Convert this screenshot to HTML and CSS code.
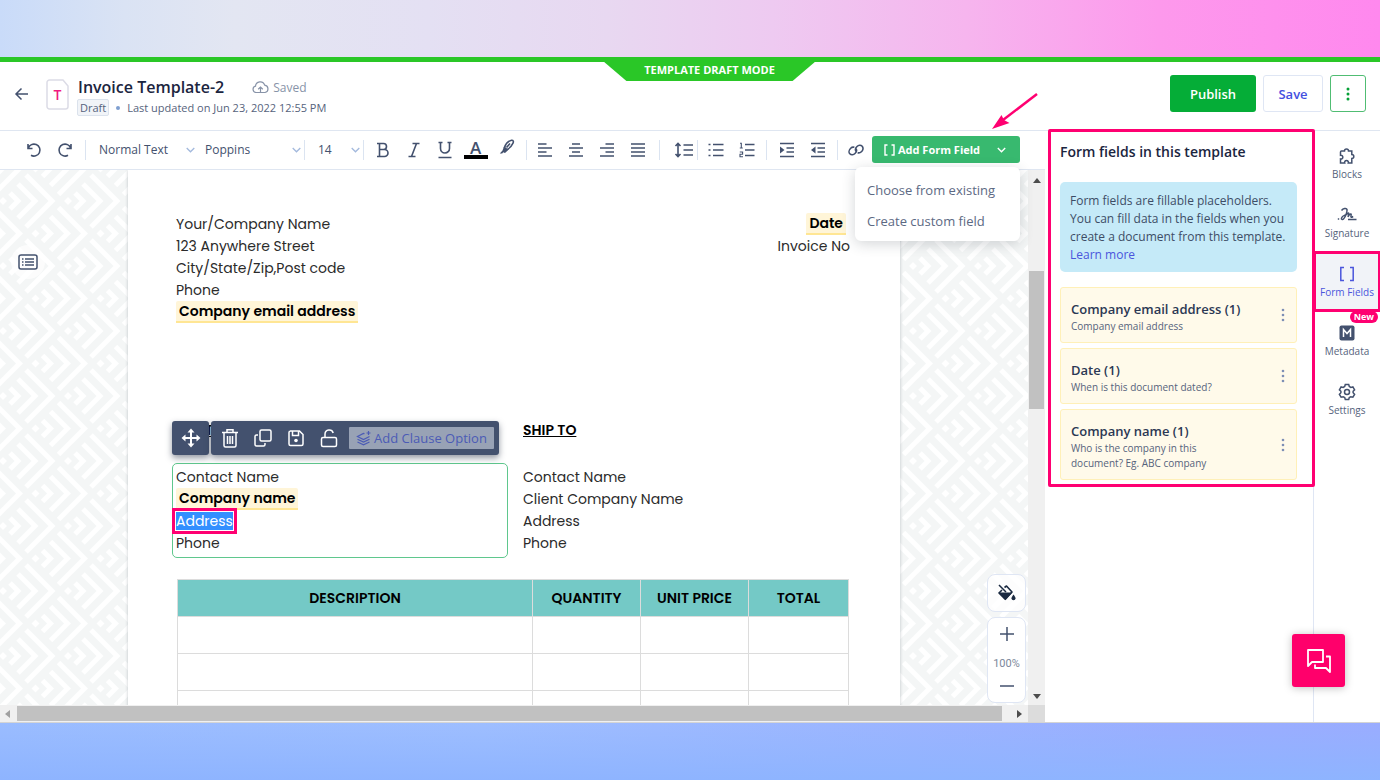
FILE: index.html
```html
<!DOCTYPE html>
<html lang="en">
<head>
<meta charset="utf-8">
<meta name="viewport" content="width=device-width, initial-scale=1">
<title>Invoice Template-2</title>
<link rel="stylesheet" href="styles.css">
</head>
<body>
<div class="app">
  <header class="topbar">
    <div class="mode-badge">TEMPLATE DRAFT MODE</div>
    <button class="back" aria-label="Back"><svg width="16" height="14" viewBox="0 0 16 14"><path d="M14 7H2M7.500 1.500 2 7l5.500 5.500"/></svg></button>
    <div class="file-icon">
      <svg width="23" height="31" viewBox="0 0 23 31"><path d="M3.500 1H17l5 6v20.500a2.500 2.500 0 0 1-2.500 2.500h-16A2.500 2.500 0 0 1 1 27.500v-24A2.500 2.500 0 0 1 3.500 1z" fill="#fff" stroke="#dcdce6" stroke-width="1.500"/></svg>
      <span>T</span>
    </div>
    <div class="file-info">
      <div class="title-row">
        <h1>Invoice Template-2</h1>
        <span class="saved"><svg width="17" height="14" viewBox="0 0 17 14"><path d="M5 12.500H4A3.200 3.200 0 0 1 3.500 6.200 4.700 4.700 0 0 1 12.700 5.200 3.700 3.700 0 0 1 13 12.500H12"/><path d="M8.500 12.500V7M6.200 9.200 8.500 7l2.300 2.200M5 12.500h7"/></svg>Saved</span>
      </div>
      <div class="meta-row"><span class="draft">Draft</span><i class="dot"></i><span>Last updated on Jun 23, 2022 12:55 PM</span></div>
    </div>
    <div class="actions">
      <button class="publish">Publish</button>
      <button class="save">Save</button>
      <button class="more" aria-label="More"><svg width="4" height="14" viewBox="0 0 4 14"><circle cx="2" cy="2" r="1.500"/><circle cx="2" cy="7" r="1.500"/><circle cx="2" cy="12" r="1.500"/></svg></button>
    </div>
  </header>

  <main class="workspace">
    <section class="editor">
      <div class="toolbar">
        <button class="tool" aria-label="Undo"><svg width="16" height="16" viewBox="0 0 16 16"><path d="M2 2v4.500h4.500M2.300 6.200A6 6 0 1 1 5 13.300"/></svg></button>
        <button class="tool" aria-label="Redo"><svg width="16" height="16" viewBox="0 0 16 16"><path d="M14 2v4.500H9.500M13.700 6.200A6 6 0 1 0 11 13.300"/></svg></button>
        <i class="sep wide"></i>
        <select class="pick" aria-label="Text style"><option>Normal Text</option></select>
        <select class="pick family" aria-label="Font"><option>Poppins</option></select>
        <i class="sep wide flush"></i>
        <select class="pick size" aria-label="Font size"><option>14</option></select>
        <i class="sep flush"></i>
        <button class="tool" aria-label="Bold"><svg width="16" height="16" viewBox="0 0 16 16"><path d="M2 1.500h6.500a3 3 0 0 1 0 6H4.500h5a3.400 3.400 0 0 1 0 7H2M4.500 1.500v13"/></svg></button>
        <button class="tool" aria-label="Italic"><svg width="16" height="16" viewBox="0 0 16 16"><path d="M6.500 1.500h7M2.500 14.500h7M10.500 1.500l-5 13"/></svg></button>
        <button class="tool" aria-label="Underline"><svg width="16" height="18" viewBox="0 0 16 18"><path d="M1.500 1.500h4M10.500 1.500h4M3.500 1.500v6a4.500 4.500 0 0 0 9 0v-6M1.500 16.500h13"/></svg></button>
        <button class="tool color" aria-label="Text color"><span>A</span></button>
        <button class="tool" aria-label="Highlight"><svg class="brush" width="16" height="16" viewBox="0 0 16 16"><path d="M5.500 8.500C6.500 5.500 9.500 2 12.500 1.200c1.800-.2 2.300 1.300 1.500 3C12.500 7.500 10.500 9.500 8 10.500z"/><path class="solid" d="M5 7.500l4 3.800-3 2.700-1.800-.8-1 1.300H.8l2.700-3z"/><path d="M7.500 8.500l3.500-4"/></svg></button>
        <i class="sep"></i>
        <button class="tool" aria-label="Align left"><svg width="16" height="16" viewBox="0 0 16 16"><path d="M1 2h8.500M1 6h14M1 10h8.500M1 14h14"/></svg></button>
        <button class="tool" aria-label="Align center"><svg width="16" height="16" viewBox="0 0 16 16"><path d="M4 2h8M1 6h14M4 10h8M1 14h14"/></svg></button>
        <button class="tool" aria-label="Align right"><svg width="16" height="16" viewBox="0 0 16 16"><path d="M6.500 2H15M1 6h14M6.500 10H15M1 14h14"/></svg></button>
        <button class="tool" aria-label="Justify"><svg width="16" height="16" viewBox="0 0 16 16"><path d="M1 2h14M1 6h14M1 10h14M1 14h14"/></svg></button>
        <i class="sep spaced"></i>
        <button class="tool lines" aria-label="Line height"><svg width="20" height="16" viewBox="0 0 20 16"><path d="M4 2v12M1.500 4 4 1.500 6.500 4M1.500 12 4 14.500 6.500 12M9.500 3H19M9.500 8H19M9.500 13H19"/></svg></button>
        <i class="sep tight"></i>
        <button class="tool" aria-label="Bullet list"><svg width="16" height="16" viewBox="0 0 16 16"><path d="M5 2.500h10.500M5 8h10.500M5 13.500h10.500M.5 2.500h2M.5 8h2M.5 13.500h2"/></svg></button>
        <button class="tool" aria-label="Numbered list"><svg width="16" height="16" viewBox="0 0 16 16"><path d="M6 2.500h9.500M6 8h9.500M6 13.500h9.500"/><path class="thin" d="M1 1.200h1.300V6M.8 6h3M.8 10h2.800v2.300H1v2.500h3"/></svg></button>
        <i class="sep roomy"></i>
        <button class="tool" aria-label="Indent"><svg width="16" height="16" viewBox="0 0 16 16"><path d="M1 1.500h14M7.500 6H15M7.500 10H15M1 14.500h14"/><path class="solid" d="M1 4.500l4.500 3.500L1 11.500z"/></svg></button>
        <button class="tool" aria-label="Outdent"><svg width="16" height="16" viewBox="0 0 16 16"><path d="M1 1.500h14M7.500 6H15M7.500 10H15M1 14.500h14"/><path class="solid" d="M5.500 4.500 1 8l4.500 3.500z"/></svg></button>
        <i class="sep"></i>
        <button class="tool" aria-label="Link"><svg width="16" height="16" viewBox="0 0 16 16"><path d="M9.600 10.700a3.700 3.700 0 0 0 3.700-.9 3.900 3.900 0 0 0 .9-5.600c-1.400-1.400-3.700-1.200-5.200.3s-2 3.700-.6 5.200M6.400 5.300a3.700 3.700 0 0 0-3.700.9c-1.500 1.500-2.300 4.200-.9 5.600s3.700 1.200 5.200-.3 2-3.700.6-5.200"/></svg></button>
        <div class="add-field">
          <button class="add-btn"><svg width="11" height="12" viewBox="0 0 11 12"><path d="M3.500 1H1v10h2.500M7.500 1H10v10H7.500"/></svg>Add Form Field<svg class="caret" width="9" height="6" viewBox="0 0 9 6"><path d="M.8 1l3.700 3.700L8.200 1"/></svg></button>
          <div class="menu"><button>Choose from existing</button><button>Create custom field</button></div>
          <svg class="arrow" width="48" height="40" viewBox="0 0 48 40"><path d="M46 2 12 28" stroke="#ff0071" stroke-width="2.500"/><path d="M1 37 10.500 23l2.500 5 5.500 3z" fill="#ff0071" stroke="none"/></svg>
        </div>
      </div>

      <div class="canvas">
        <div class="viewport">
          <button class="outline-btn" aria-label="Outline"><svg width="20" height="16" viewBox="0 0 20 16"><rect x="1" y="1" width="18" height="14" rx="2"/><path d="M4 5h1.500M4 8h1.500M4 11h1.500M7 5h9M7 8h9M7 11h9"/></svg></button>
          <article class="paper">
            <div class="sender">
              <div>
                <p>Your/Company Name</p><p>123 Anywhere Street</p><p>City/State/Zip,Post code</p><p>Phone</p>
                <p><span class="field">Company email address</span></p>
              </div>
              <div class="right"><p><span class="field date">Date</span></p><p>Invoice No</p></div>
            </div>
            <div class="parties">
              <div class="bill">
                <h2>BILL TO</h2>
                <div class="selected">
                  <p>Contact Name</p>
                  <p><span class="field">Company name</span></p>
                  <p><span class="picked">Address</span></p>
                  <p>Phone</p>
                </div>
                <div class="block-tools">
                  <button class="move" aria-label="Move"><svg width="20" height="20" viewBox="0 0 20 20"><path d="M10 3v14M3 10h14"/><path class="solid" d="M10 .5 13.500 4.500h-7zM10 19.500 6.500 15.500h7zM.5 10l4-3.500v7zM19.500 10l-4 3.500v-7z"/></svg></button>
                  <div class="tool-group">
                    <button aria-label="Delete"><svg width="18" height="20" viewBox="0 0 18 20"><path d="M1 4.500h16M6 4V1.800h6V4M3 4.500v13a1.500 1.500 0 0 0 1.500 1.500h9a1.500 1.500 0 0 0 1.500-1.500v-13M6.500 8v8M9 8v8M11.500 8v8"/></svg></button>
                    <button aria-label="Duplicate"><svg width="20" height="20" viewBox="0 0 20 20"><rect x="7" y="2" width="11" height="11" rx="1.500"/><path d="M5 7H3.500A1.500 1.500 0 0 0 2 8.500v8A1.500 1.500 0 0 0 3.500 18h7a1.500 1.500 0 0 0 1.500-1.500V15"/></svg></button>
                    <button aria-label="Save block"><svg width="18" height="18" viewBox="0 0 18 18"><path d="M3 2h9.500L16 5.500V15a1.500 1.500 0 0 1-1.500 1.500h-11A1.500 1.500 0 0 1 2 15V3.500A1.500 1.500 0 0 1 3.500 2M5.500 2v4.500h6V2"/><circle class="solid" cx="9" cy="11.500" r="1.800"/></svg></button>
                    <button aria-label="Unlock"><svg width="18" height="20" viewBox="0 0 18 20"><rect x="1.500" y="9.500" width="15" height="9" rx="1.500"/><path d="M5 9.500V6a4.200 4.200 0 0 1 8.200-1"/></svg></button>
                    <button class="clause"><svg width="16" height="16" viewBox="0 0 16 16"><path d="M8.500 3.700 7.500 3.500 1.500 6.500l6 3 6-3M1.500 9.200l6 2.800 6-2.800M1.500 12l6 2.800 6-2.800M12.500 1v4M10.500 3h4"/></svg>Add Clause Option</button>
                  </div>
                </div>
              </div>
              <div class="ship">
                <h2>SHIP TO</h2>
                <p>Contact Name</p><p>Client Company Name</p><p>Address</p><p>Phone</p>
              </div>
            </div>
            <table class="items">
              <colgroup><col class="c-desc"><col class="c-mid"><col class="c-mid"><col class="c-total"></colgroup>
              <thead><tr><th>DESCRIPTION</th><th>QUANTITY</th><th>UNIT PRICE</th><th>TOTAL</th></tr></thead>
              <tbody><tr><td></td><td></td><td></td><td></td></tr><tr><td></td><td></td><td></td><td></td></tr><tr><td></td><td></td><td></td><td></td></tr></tbody>
            </table>
          </article>
          <div class="zoom-tools">
            <button class="fill" aria-label="Background fill"><svg width="19" height="18" viewBox="0 0 19 18"><path d="M2 1l7 7" stroke="#1b2a41" stroke-width="1.500"/><path d="M7.500 3.500 9.500 2 15 8 8 15 2 9l3-3" fill="none" stroke="#1b2a41" stroke-width="1.600" stroke-linejoin="round"/><path d="M1.500 8.500h14L8.500 16.200z" fill="#1b2a41" stroke="none"/><path d="M16.500 10.500c1.300 1.800 2 2.800 2 3.800a2 2 0 0 1-4 0c0-1 .7-2 2-3.800z" fill="#1b2a41" stroke="none"/></svg></button>
            <div class="zoom">
              <button aria-label="Zoom in"><svg width="16" height="16" viewBox="0 0 16 16"><path d="M1 8h14M8 1v14"/></svg></button>
              <span>100%</span>
              <button aria-label="Zoom out"><svg width="16" height="16" viewBox="0 0 16 16"><path d="M1 8h14"/></svg></button>
            </div>
          </div>
        </div>
        <div class="vbar"><i class="up"></i><b></b><i class="down"></i></div>
        <div class="hbar"><i class="left"></i><b></b><i class="rightward"></i></div>
        <div class="corner"></div>
      </div>
    </section>

    <aside class="panel">
      <div class="panel-frame">
        <h2>Form fields in this template</h2>
        <p class="info">Form fields are fillable placeholders. You can fill data in the fields when you create a document from this template. <a href="#">Learn more</a></p>
        <div class="card"><div><h3>Company email address (1)</h3><p>Company email address</p></div><button aria-label="Options"><svg width="4" height="14" viewBox="0 0 4 14"><circle cx="2" cy="2" r="1.300"/><circle cx="2" cy="7" r="1.300"/><circle cx="2" cy="12" r="1.300"/></svg></button></div>
        <div class="card"><div><h3>Date (1)</h3><p>When is this document dated?</p></div><button aria-label="Options"><svg width="4" height="14" viewBox="0 0 4 14"><circle cx="2" cy="2" r="1.300"/><circle cx="2" cy="7" r="1.300"/><circle cx="2" cy="12" r="1.300"/></svg></button></div>
        <div class="card"><div><h3>Company name (1)</h3><p>Who is the company in this document? Eg. ABC company</p></div><button aria-label="Options"><svg width="4" height="14" viewBox="0 0 4 14"><circle cx="2" cy="2" r="1.300"/><circle cx="2" cy="7" r="1.300"/><circle cx="2" cy="12" r="1.300"/></svg></button></div>
      </div>
    </aside>

    <nav class="rail">
      <button><svg width="18" height="18" viewBox="0 0 18 18"><path d="M3.500 4h3a2 2 0 1 1 4 0h3.300v3.500a2 2 0 1 1 0 4V16h-3.500a1.900 1.900 0 1 0-3.600 0H2.500v-4a1.900 1.900 0 1 0 0-3.700V5a1 1 0 0 1 1-1z"/></svg>Blocks</button>
      <button><svg width="20" height="18" viewBox="0 0 20 18"><path d="M.8 13h1.400M4.500 4.500C6 2.500 9.500 1.500 10 3.500c.4 2-1.500 7.500-3.500 9.500-1 1-2.500.3-2-1C5.500 9 9 9.500 10.500 7.500c1.500-1.500 1.500 0 .5 3.500.8-2 2.200-3.300 3-3 1 .5-1 2.800.2 3.200.8.200 1.500-.5 2-.7M11 13.500h8.500"/></svg>Signature</button>
      <button class="active"><svg width="16" height="16" viewBox="0 0 16 16"><path d="M5 1.500H1.800v13H5M11 1.500h3.200v13H11"/></svg>Form Fields</button>
      <button><span class="new">New</span><svg width="16" height="16" viewBox="0 0 16 16"><rect width="15" height="15" x=".5" y=".5" rx="2" fill="#43516e" stroke="none"/><path d="M4.500 12V4.500L8 8.500l3.500-4V12" stroke="#fff"/></svg>Metadata</button>
      <button><svg width="18" height="18" viewBox="0 0 18 18"><path d="M7.300 1.500h3.400l.6 2 1.500.9 2.100-.5 1.700 2.900-1.500 1.500v1.500l1.500 1.500-1.700 2.900-2.100-.5-1.500.8-.6 2H7.300l-.6-2-1.500-.8-2.100.5-1.700-2.900 1.500-1.500V8.300L1.400 6.800l1.700-2.900 2.100.5 1.500-.9z"/><circle cx="9" cy="9" r="2.500"/></svg>Settings</button>
    </nav>
    <button class="chat" aria-label="Chat"><svg width="26" height="26" viewBox="0 0 26 26"><path d="M2 2h15v12H6l-4 4zM20 8.500h4V24l-4-4H9v-3.500"/></svg></button>
  </main>
</div>
</body>
</html>
```
FILE: styles.css
```css
* { box-sizing: border-box; }
body {
  margin: 0;
  padding: 57px 0;
  min-height: 100vh;
  display: flex;
  font-family: "Open Sans", "Noto Sans", sans-serif;
  color: #43516e;
  background:
    linear-gradient(90deg, #c9dbf9 0, #dae3f4 9%, #e3e6f2 17%, #e4e0f3 31%, #e8d8f1 44%, #eecaf1 56%, #f6b5ee 70%, #fd99ec 84%, #ff88ee 100%) top / 100% 57px no-repeat,
    linear-gradient(180deg, transparent, #8eb4ff) bottom / 100% 57px no-repeat,
    linear-gradient(90deg, #9abcff, #9ebeff 35%, #9aaeff 85%, #9aacff) bottom / 100% 57px no-repeat;
}
h1, h2, h3, p { margin: 0; }
button, select { font: inherit; color: inherit; border: 0; background: none; padding: 0; cursor: pointer; }
svg { display: block; fill: none; stroke: #43516e; stroke-width: 1.5; flex: none; }
svg .solid { fill: currentColor; stroke: none; }

.app { flex: 1; display: flex; flex-direction: column; background: #fff; border-top: 5px solid #2ac727; border-bottom: 1px solid #d4d4d4; min-width: 0; }

.topbar { position: relative; height: 69px; display: flex; align-items: flex-start; padding: 13px 14px 0; border-bottom: 1px solid #dfe6f1; }
.mode-badge {
  position: absolute; top: -1px; left: calc(50% - 87px); width: 213px; height: 20px;
  background: #2ac727; color: #fff; clip-path: polygon(0 0, 100% 0, 89% 100%, 11% 100%);
  font-size: 11px; font-weight: 700; line-height: 18px; text-align: center;
}
.back { margin-top: 12px; width: 16px; }
.file-icon { position: relative; margin: 4px 8px 0 16px; }
.file-icon span { position: absolute; inset: 0; display: grid; place-items: center; color: #f01a80; font-size: 14px; font-weight: 600; line-height: 31px; }
.title-row { display: flex; align-items: center; gap: 28px; height: 24px; }
h1 { font-size: 16px; line-height: 24px; font-weight: 600; color: #1b2540; margin-left: 1px; }
.saved { display: flex; align-items: center; gap: 4px; font-size: 12px; color: #8893a8; }
.saved svg { stroke: #8893a8; stroke-width: 1.2; }
.meta-row { display: flex; align-items: center; height: 17px; font-size: 11px; line-height: 17px; color: #56637c; }
.draft { padding: 0 2px; border: 1px solid #dbe2ec; background: #f1f4f8; border-radius: 2px; line-height: 15px; }
.dot { width: 4px; height: 4px; border-radius: 50%; background: #7f9fd0; margin: 0 7px; }
.actions { margin-left: auto; display: flex; gap: 7px; }
.actions button { height: 37px; border-radius: 3px; font-size: 13px; font-weight: 600; }
.publish { width: 86px; background: #05ad37; color: #fff; }
.actions .save { width: 60px; border: 1px solid #dfe6f4; color: #4350e0; }
.actions .more { width: 36px; border: 1px solid #50bd73; display: grid; place-items: center; }
.more svg { fill: #05a136; stroke: none; }

.workspace { position: relative; flex: 1; display: flex; min-height: 0; }
.editor { flex: 1; min-width: 0; display: flex; flex-direction: column; }

.toolbar { display: flex; align-items: center; height: 39px; padding: 0 0 1px 18px; border-bottom: 1px solid #dfe6f1; }
.tool { width: 31px; height: 31px; display: flex; align-items: center; justify-content: center; flex: none; }
.tool svg { stroke-width: 1.6; }
.tool .thin { stroke-width: 1.1; }
.tool .brush { margin-bottom: 6px; }
.tool.lines { width: 26px; }
.tool.color span { width: 24px; height: 19px; border-bottom: 4px solid #000; font-size: 17px; line-height: 15px; font-weight: 600; text-align: center; }
.sep { width: 1px; height: 20px; background: #dbe4f1; margin: 0 2px 0 4px; flex: none; }
.sep.wide { margin: 0 13px 0 5px; }
.sep.flush { margin-left: 1px; margin-right: 3px; }
.sep.wide.flush { margin-right: 13px; }
.sep.spaced { margin: 0 11px 0 6px; }
.sep.tight { margin-left: 0; }
.sep.roomy { margin-right: 4px; }
.pick {
  appearance: none; width: 98px; margin-right: 8px; font-size: 12px; line-height: 20px; flex: none;
  background: url("data:image/svg+xml,%3Csvg xmlns='http://www.w3.org/2000/svg' width='9' height='6'%3E%3Cpath d='M.7 1l3.800 3.800L8.300 1' fill='none' stroke='%23a3b9dd' stroke-width='1.300'/%3E%3C/svg%3E") right 2px center no-repeat;
}
.pick.family { margin-right: 0; }
.pick.size { width: 44px; margin-right: 0; }

.add-field { position: relative; flex: none; margin-left: 1px; }
.add-btn { display: flex; align-items: center; gap: 3px; width: 148px; height: 27px; padding: 0 14px 0 12px; border-radius: 3px; background: #38b96f; color: #fff; font-size: 11px; font-weight: 700; white-space: nowrap; }
.add-btn svg { stroke: #fff; stroke-width: 1.4; }
.add-btn .caret { margin-left: auto; }
.menu { position: absolute; z-index: 5; top: 31px; right: 0; width: 165px; height: 74px; padding: 7px 0; background: #fff; border-radius: 6px; box-shadow: 0 3px 14px rgba(40, 50, 60, .2); }
.menu button { display: block; width: 100%; height: 31px; padding-left: 12px; text-align: left; font-size: 13px; color: #5c6983; white-space: nowrap; }
.arrow { position: absolute; z-index: 6; right: -19px; top: -44px; }

.canvas { flex: 1; display: grid; grid-template: minmax(0, 1fr) 17px / minmax(0, 1fr) 17px; min-height: 0; }
.viewport {
  position: relative; overflow: hidden; height: 535px;
  background: #fff url("data:image/svg+xml,%3Csvg xmlns='http://www.w3.org/2000/svg' xmlns:xlink='http://www.w3.org/1999/xlink' width='65' height='65'%3E%3Crect width='65' height='65' fill='%23f4f6f6'/%3E%3Cdefs%3E%3Cg id='a'%3E%3Cpath d='M-4 0 0-4 4 0 0 4z' fill='%23fff'/%3E%3Cpath d='M7-8 15 0 7 8M15-17 32 0 15 17M23-26 49 0 23 26' fill='none' stroke='%23fff' stroke-width='5'/%3E%3C/g%3E%3C/defs%3E%3Cuse xlink:href='%23a' x='0' y='0'/%3E%3Cuse xlink:href='%23a' x='65' y='0'/%3E%3Cuse xlink:href='%23a' x='0' y='65'/%3E%3Cuse xlink:href='%23a' x='65' y='65'/%3E%3Cuse xlink:href='%23a' x='32.500' y='32.500'/%3E%3Cuse xlink:href='%23a' x='-32.500' y='32.500'/%3E%3C/svg%3E") 3px 31px;
}
.outline-btn { position: absolute; left: 11px; top: 75px; width: 34px; height: 34px; display: grid; place-items: center; background: rgba(255, 255, 255, .7); border-radius: 50%; }
.paper {
  width: 772px; min-height: 100%; margin: 0 auto; padding: 43px 50px 0 48px; background: #fff;
  box-shadow: 0 0 3px rgba(60, 70, 80, .3);
  font-family: Poppins, Inter, sans-serif; font-size: 14px; line-height: 22px; color: #2b2b2b;
}
.sender { display: flex; justify-content: space-between; }
.right { text-align: right; }
.field { display: inline-block; height: 22px; line-height: 20px; padding: 0 3px; background: #fff5d8; border-bottom: 2px solid #ffe694; border-radius: 2px 2px 0 0; color: #000; font-weight: 600; vertical-align: top; }
.field.date { margin-right: 4px; }
.parties { display: grid; grid-template-columns: 347px 1fr; margin: 96px 0 21px; }
.parties h2 { font-size: 14px; line-height: 22px; font-weight: 600; text-decoration: underline; color: #000; margin-bottom: 25px; }
.bill { position: relative; }
.bill h2 { margin-bottom: 22px; }
.selected { margin: 0 15px 0 -4px; padding: 2px 3px 3px; border: 1px solid #5fc78d; border-radius: 5px; }
.picked { display: inline-block; height: 18px; line-height: 18px; background: #338fff; color: #fff; outline: 3px solid #ff0071; outline-offset: 1px; }
.block-tools { position: absolute; top: 2px; left: -4px; display: flex; gap: 2px; font-family: "Open Sans", sans-serif; }
.block-tools button { height: 24px; display: flex; align-items: center; justify-content: center; color: #fff; }
.block-tools svg { stroke: #fff; }
.block-tools .move, .tool-group { height: 34px; background: #43516e; border-radius: 3px; box-shadow: 0 3px 6px rgba(40, 50, 70, .5); }
.block-tools .move { width: 37px; }
.block-tools .move svg { stroke-width: 2; }
.tool-group { display: flex; align-items: center; padding: 0 5px 0 2px; }
.tool-group button { width: 33px; }
.tool-group .clause { width: 145px; height: 22px; margin-left: 4px; gap: 2px; background: #98a2b5; color: #4b5bb5; font-size: 13px; white-space: nowrap; border-radius: 1px; }
.tool-group .clause svg { stroke: #4b5bb5; stroke-width: 1.2; }

.items { width: 672px; margin-left: 1px; table-layout: fixed; border-collapse: collapse; }
.c-mid { width: 108px; }
.c-total { width: 100px; }
.items th, .items td { border: 1px solid #dcdcdc; padding: 0; height: 37px; }
.items th { background: #74c9c6; color: #000; font-size: 14px; font-weight: 600; line-height: 20px; }

.zoom-tools { position: absolute; right: 2px; bottom: 2px; width: 39px; display: grid; gap: 5px; }
.fill { height: 38px; display: grid; place-items: center; background: rgba(255, 255, 255, .8); border: 1px solid #dfe6f4; border-radius: 8px; }
.zoom { height: 86px; display: flex; flex-direction: column; justify-content: space-between; align-items: center; padding: 8px 0; background: #fff; border: 1px solid #dfe6f4; border-radius: 8px; font: 11px/16px Roboto, sans-serif; color: #7c879b; }
.zoom span { margin-top: 7px; }

.vbar { background: #f0f0f0; display: flex; flex-direction: column; align-items: center; padding: 8px 0 6px; }
.vbar b { width: 15px; height: 138px; background: #c1c1c1; margin-top: 88px; }
.vbar i, .hbar i { border: 4px solid transparent; }
.vbar .up { border-top: 0; border-bottom: 5px solid #4d4d4d; }
.vbar .down { border-bottom: 0; border-top: 5px solid #4d4d4d; margin-top: auto; }
.hbar { background: #f0f0f0; display: flex; align-items: center; padding: 0 6px 0 5px; }
.hbar b { flex: 1; height: 15px; background: #c1c1c1; margin: 0 15px 0 7px; }
.hbar .left { border-left: 0; border-right: 5px solid #a0a0a0; }
.hbar .rightward { border-right: 0; border-left: 5px solid #4d4d4d; }
.corner { background: #dcdcdc; }

.panel { width: 268px; flex: none; padding-left: 3px; }
.panel-frame { position: relative; margin: -2px -2px 0 0; padding: 10px 15px 4px 9px; border: 3px solid #ff0071; border-radius: 2px; }
.panel h2 { font-size: 14px; line-height: 20px; font-weight: 600; color: #1b2540; }
.info { margin: 20px 0 15px; padding: 10px 8px 8px 10px; background: #c5eaf8; border-radius: 5px; font-size: 12px; line-height: 18px; color: #3d4d66; }
.info a { color: #4a55dc; text-decoration: none; }
.card { display: flex; align-items: center; justify-content: space-between; margin-bottom: 5px; padding: 0 11px 0 10px; background: #fffaea; border: 1px solid #fff0b8; border-radius: 3px; }
.card > div { padding: 11px 0 8px; }
.card:last-child { margin-bottom: 0; }
.card h3 { font-size: 13px; line-height: 20px; font-weight: 600; color: #2b3854; }
.card p { font-size: 10px; line-height: 15px; color: #56637c; max-width: 150px; }
.card svg { fill: #7d8fb5; stroke: none; }

.rail { width: 67px; flex: none; border-left: 1px solid #dfe6f4; padding-top: 3px; }
.rail button { position: relative; display: flex; flex-direction: column; align-items: center; justify-content: center; gap: 2px; width: 100%; height: 59px; font-size: 10px; line-height: 14px; white-space: nowrap; color: #56637c; }
.rail svg { height: 18px; }
.rail .active { background: #f1f3f8; color: #4a55dc; outline: 3px solid #ff0071; outline-offset: -2px; }
.rail .active svg { stroke: #4a55dc; }
.new { position: absolute; top: 0; right: 2px; padding: 0 4px; border-radius: 6px; background: #ff0071; color: #fff; font-size: 9px; line-height: 12px; font-weight: 700; }
.chat { position: absolute; z-index: 3; right: 35px; bottom: 35px; width: 53px; height: 53px; display: grid; place-items: center; background: #ff006b; border-radius: 3px; box-shadow: 0 1px 8px rgba(0, 0, 0, .25); }
.chat svg { stroke: #fff; stroke-linejoin: round; stroke-width: 1.8; }
```
